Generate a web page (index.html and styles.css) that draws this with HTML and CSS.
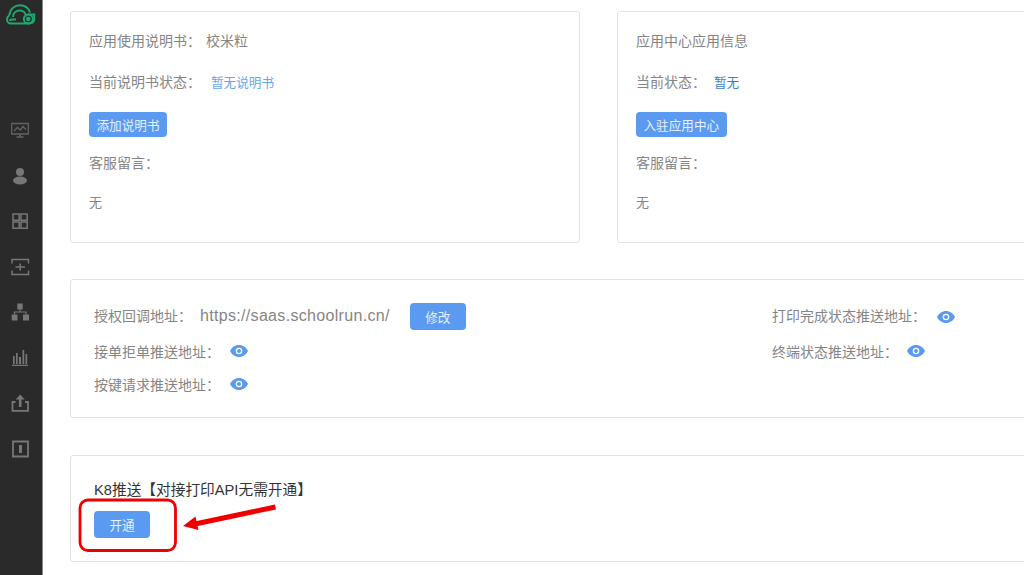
FILE: index.html
```html
<!DOCTYPE html>
<html lang="zh-CN">
<head>
<meta charset="utf-8">
<title>应用信息</title>
<link rel="stylesheet" href="styles.css">
</head>
<body>
<svg width="0" height="0" class="defs">
  <symbol id="eye" viewBox="0 0 18 12">
    <path fill="#5a9af0" d="M9 0C5 0 1.800 2.500 0 6c1.800 3.500 5 6 9 6s7.200-2.500 9-6c-1.800-3.500-5-6-9-6z"/>
    <circle cx="9" cy="6" r="3.300" fill="#fff"/>
    <circle cx="9" cy="6" r="2" fill="#5a9af0"/>
  </symbol>
</svg>
<div class="app">
  <aside class="sidebar">
    <svg class="logo" viewBox="0 0 30 22" fill="none" stroke="#20a870" stroke-width="1.900">
      <path d="M3.500 11C4 5 8.500 1.300 14 1.300s8.500 2.700 10 7.200"/>
      <path d="M7 13C7 9 10 6.500 14 6.500s5.500 2.500 6.500 6"/>
      <path d="M3.500 11C1.500 12.500 1 14 1 15.500 1 18 3 19.500 5 19.500h18"/>
      <path d="M10 15.500H5.500c-1 0-1.500.5-1.500 1.500"/>
      <circle cx="22.300" cy="15" r="2.300" fill="#20a870" stroke="none"/>
      <circle cx="22.300" cy="15" r="4.500"/>
      <path d="M22.300 10.500h6V15c0 3-2.300 4.500-5.300 4.500"/>
    </svg>
    <nav class="nav">
      <svg class="nav-icon" viewBox="0 0 20 20" fill="none" stroke="#636363" stroke-width="1.300">
        <path d="M1.700 3.500h16.600V14H1.700z"/><path d="M4 11l3.500-3.500 3 2.500 2.500-3.500 3 3"/><path d="M10 14v2.500M6.500 17h7" stroke-width="1.600"/>
      </svg>
      <svg class="nav-icon" viewBox="0 0 20 20" fill="#777">
        <circle cx="10" cy="6" r="4"/><ellipse cx="10" cy="14.500" rx="7" ry="4"/>
      </svg>
      <svg class="nav-icon" viewBox="0 0 20 20" fill="none" stroke="#777" stroke-width="1.500">
        <path d="M3 3h6.200v6.200H3zM11 3h6.200v6.200H11zM3 11h6.200v6.200H3zM11 11h6.200v6.200H11z"/>
      </svg>
      <svg class="nav-icon" viewBox="0 0 20 20" fill="none" stroke="#777" stroke-width="1.500">
        <path d="M2 6.500V2.500h16.500v4M2 13.500v4h16.500v-4M5.500 10h9.500M10.200 6.500v7"/>
      </svg>
      <svg class="nav-icon" viewBox="0 0 20 20" fill="#777">
        <path d="M7.300 1.500h5.400v6H7.300zM1.700 12.500h5.800v6H1.700zM13 12.500h6v6h-6z"/>
        <path d="M10 7.500V10M4.500 12.500V10h11.500v2.500" fill="none" stroke="#777" stroke-width="1.200"/>
      </svg>
      <svg class="nav-icon" viewBox="0 0 20 20" fill="#777">
        <path d="M3 8h1.700v8H3zM6 5h1.700v11H6zM9 9h2v7H9zM12.500 2h1.700v14h-1.700zM15.500 6h1.700v10h-1.700zM2 16.800h16V18H2z"/>
      </svg>
      <svg class="nav-icon" viewBox="0 0 20 20" fill="none" stroke="#777" stroke-width="1.800">
        <path d="M5.500 9H2.500v8.800h15.500V9h-3"/><path d="M10.200 14V5" stroke-width="2.600"/><path d="M5.700 6.500l4.500-5 4.500 5z" fill="#777" stroke="none"/>
      </svg>
      <svg class="nav-icon" viewBox="0 0 20 20" fill="none" stroke="#777" stroke-width="1.800">
        <path d="M3 2.500h15v15H3z"/><path d="M10.500 6v8" stroke-width="3"/>
      </svg>
    </nav>
  </aside>
  <main class="main">
    <div class="top-row">
      <section class="card info-card">
        <p class="line">应用使用说明书：<span class="value">校米粒</span></p>
        <p class="line">当前说明书状态：<span class="status status-light">暂无说明书</span></p>
        <button class="btn btn-small">添加说明书</button>
        <p class="line">客服留言：</p>
        <p class="line note">无</p>
      </section>
      <section class="card info-card">
        <p class="line">应用中心应用信息</p>
        <p class="line">当前状态：<span class="status status-dark">暂无</span></p>
        <button class="btn btn-small">入驻应用中心</button>
        <p class="line">客服留言：</p>
        <p class="line note">无</p>
      </section>
    </div>
    <section class="card address-card">
      <div class="address-col">
        <div class="address address-first"><span class="raised">授权回调地址：<span class="url">https://saas.schoolrun.cn/</span></span><button class="btn btn-large btn-edit">修改</button></div>
        <div class="address">接单拒单推送地址：<svg class="eye"><use href="#eye"/></svg></div>
        <div class="address">按键请求推送地址：<svg class="eye"><use href="#eye"/></svg></div>
      </div>
      <div class="address-col">
        <div class="address address-first"><span class="raised">打印完成状态推送地址：</span><svg class="eye eye-wide"><use href="#eye"/></svg></div>
        <div class="address">终端状态推送地址：<svg class="eye eye-tight"><use href="#eye"/></svg></div>
      </div>
    </section>
    <section class="card push-card">
      <p class="push-title">K8推送【对接打印API无需开通】</p>
      <button class="btn btn-large">开通</button>
    </section>
  </main>
</div>
<svg class="annotation" viewBox="0 0 1024 575" fill="none">
  <rect x="80" y="500" width="95.500" height="50.500" rx="8" stroke="#ee0000" stroke-width="2.800"/>
  <path d="M275.500 507L195 524" stroke="#ee0000" stroke-width="5"/>
  <path d="M183 526l12.500-9.500 3 13.500z" fill="#ee0000"/>
</svg>
</body>
</html>
```
FILE: styles.css
```css
* { box-sizing: border-box; }
html, body { margin: 0; height: 100%; overflow: hidden; background: #fff; }
body {
  font-family: "Liberation Sans", "Noto Sans CJK SC", sans-serif;
  font-size: 14px;
  color: #858585;
}
.defs { position: absolute; }
.app { display: flex; height: 575px; }
.sidebar {
  flex: 0 0 43px;
  background: #2a2a2a;
  border-right: 1px solid #8a8a8a;
  display: flex;
  flex-direction: column;
  align-items: center;
  padding: 4px 2px 0 0;
}
.logo { width: 30px; height: 22px; margin-left: 1px; display: block; }
.nav {
  display: flex;
  flex-direction: column;
  align-items: center;
  gap: 25.550px;
  margin-top: 94px;
}
.nav-icon { width: 20px; height: 20px; display: block; }
.main {
  flex: 1;
  min-width: 0;
  padding: 11px 0 0 27px;
  display: flex;
  flex-direction: column;
  overflow: hidden;
}
.card {
  border: 1px solid #e2e2e2;
  border-radius: 3px;
  background: #fff;
}
.top-row {
  display: grid;
  grid-template-columns: 510px 500px;
  column-gap: 37px;
  margin-bottom: 36px;
}
.info-card {
  height: 232px;
  padding: 0 18px;
  display: flex;
  flex-direction: column;
  align-items: flex-start;
}
.line {
  margin: 0;
  height: 20px;
  line-height: 20px;
  white-space: nowrap;
}
.info-card .line:first-child { margin-top: 19px; }
.info-card .line:nth-child(2) { margin-top: 21px; }
.info-card .btn-small { margin-top: 20px; }
.info-card .line:nth-child(4) { margin-top: 16px; }
.info-card .note { margin-top: 20px; font-size: 13px; }
.value { margin-left: 5px; }
.status { font-size: 12.600px; }
.status-light { color: #64a5f2; margin-left: 10px; }
.status-dark { color: #3d7ec9; margin-left: 8px; }
.btn {
  border: none;
  background: #5a9af0;
  color: #e6f0fd;
  font: inherit;
  font-size: 12.600px;
  border-radius: 4px;
  padding: 0;
  cursor: pointer;
  white-space: nowrap;
}
.btn-small { height: 25px; padding: 0 7.500px; }
.btn-large { width: 56px; height: 27px; }
.address-card {
  height: 139px;
  width: 1000px;
  margin-bottom: 37px;
  padding: 23px 0 0 23px;
  display: grid;
  grid-template-columns: 678px 1fr;
}
.address {
  display: flex;
  align-items: center;
  height: 27px;
  white-space: nowrap;
}
.address + .address { margin-top: 6px; }
.address-first + .address { margin-top: 7px; }
.raised { margin-bottom: 3px; }
.url { font-size: 16px; margin-left: 8px; letter-spacing: 0.320px; }
.btn-edit { margin-left: 20px; }
.eye { width: 18px; height: 12px; margin-left: 10px; }
.eye-wide { margin-left: 11px; }
.eye-tight { margin-left: 9px; }
.push-card {
  height: 107px;
  width: 1000px;
  padding: 24px 0 0 23px;
}
.push-title {
  margin: 0 0 11px;
  height: 20px;
  line-height: 20px;
  font-size: 14.700px;
  color: #333;
  white-space: nowrap;
}
.push-card .btn { display: block; }
.annotation {
  position: absolute;
  left: 0;
  top: 0;
  width: 1024px;
  height: 575px;
  pointer-events: none;
}
```
